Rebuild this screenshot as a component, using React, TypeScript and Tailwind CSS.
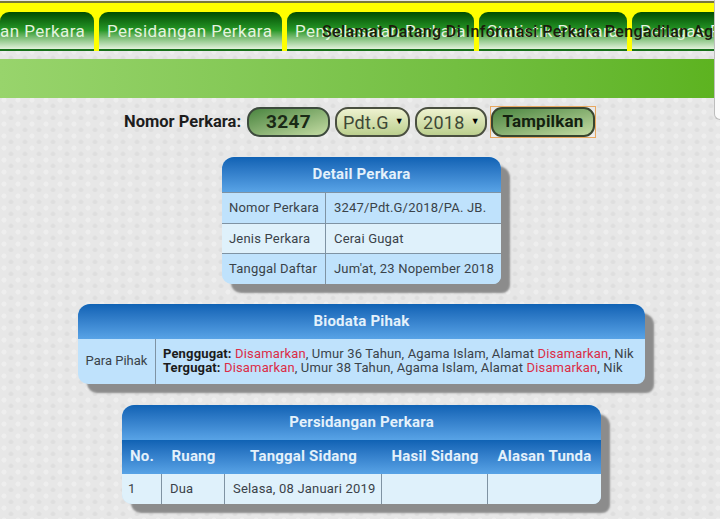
import { ReactNode } from 'react';

const tabs = [
  { label: 'an Perkara', width: 'w-[94px]', pad: 'pl-0' },
  { label: 'Persidangan Perkara', width: 'w-[183px]', pad: 'pl-[8px]' },
  { label: 'Penyelesaian Perkara', width: 'w-[187px]', pad: 'pl-[8px]' },
  { label: 'Statistik Perkara', width: 'w-[148px]', pad: 'pl-[8px]' },
  { label: 'Petugas Perkara', width: 'w-[149px]', pad: 'pl-[8px]' },
];

function Card({ title, className, children }: { title: string; className: string; children: ReactNode }) {
  return (
    <div className={`overflow-hidden rounded-t-[12px] rounded-bl-[10px] rounded-br-[8px] bg-[#bfe2fc] shadow-[9px_9px_2px_#8c8c8c] ${className}`}>
      <div className="flex h-[35px] items-center justify-center bg-gradient-to-b from-[#0f62b4] to-[#58a3e6] text-[15px] font-bold tracking-[0.2px] text-[#e4f1fb]">
        {title}
      </div>
      {children}
    </div>
  );
}

function Row({ label, value, light }: { label: string; value: string; light?: boolean }) {
  return (
    <div className={`flex h-[30.5px] items-center border-t border-[#7f93a3] text-[13px] tracking-[0.2px] text-[#3a4249] ${light ? 'bg-[#dff1fb]' : 'bg-[#bfe2fc]'}`}>
      <div className="flex h-full w-[104px] shrink-0 items-center border-r border-[#7f93a3] pl-[7px]">{label}</div>
      <div className="pl-[8px] whitespace-nowrap">{value}</div>
    </div>
  );
}

export default function App() {
  return (
    <div className="relative h-[519px] w-[720px] overflow-hidden bg-[#e7e7e7] bg-[radial-gradient(circle_at_4px_4px,#eeeeee_2px,transparent_3px),radial-gradient(circle_at_11px_10px,#dedede_1.5px,transparent_3px)] bg-[length:14px_12px] font-['Roboto',sans-serif]">
      {/* top strip + tabs */}
      <div className="h-[3px] border-b-2 border-[#77773a] bg-[#e6e6e6]" />
      <div className="flex h-[48px] gap-[5px] overflow-hidden bg-[#ffff00] pt-[9px]">
        {tabs.map((tab) => (
          <div
            key={tab.label}
            className={`flex h-[39px] shrink-0 items-center rounded-t-[9px] border-b-2 border-[#17701a] bg-gradient-to-b from-[#024d02] via-[#279a28] to-[#e3f2dc] pt-[3px] text-[17px] tracking-[0.45px] whitespace-nowrap text-[#e4f3df] ${tab.width} ${tab.pad}`}
          >
            {tab.label}
          </div>
        ))}
      </div>
      <div className="absolute top-[20px] left-[322px] text-[16px] font-medium tracking-[0.4px] whitespace-nowrap text-[#1c1c0c]">
        Selamat Datang Di Informasi Perkara Pengadilan Agama
      </div>

      {/* green bar */}
      <div className="mt-[8px] mr-[6px] h-[39px] bg-gradient-to-r from-[#98d46c] to-[#5db320]" />

      {/* scrollbar handle at the right edge */}
      <div className="absolute top-0 right-0 h-[120px] w-[6px] rounded-bl-[6px] border-b border-l border-[#bdbdbd] bg-[#fbfbfb]" />

      {/* search form */}
      <div className="mt-[8px] ml-[124px] flex items-center">
        <span className="w-[123px] pt-[1px] text-[16.5px] font-bold whitespace-nowrap text-[#1d1d1d]">Nomor Perkara:</span>
        <div className="flex h-[30px] w-[83px] items-center justify-center rounded-[13px] border-2 border-[#3d4a3d] bg-gradient-to-br from-[#4a8540] to-[#c4dca4] text-[19px] font-bold tracking-[0.4px] text-[#1a2a16]">
          3247
        </div>
        <div className="ml-[5px] flex h-[30px] w-[75px] items-center justify-between rounded-[13px] border-2 border-[#4a4f40] bg-gradient-to-b from-[#eef2cf] to-[#bccf8e] pr-[4px] pl-[6px] text-[18px] tracking-[0.3px] text-[#3e4836]">
          Pdt.G<span className="text-[9px] text-black">▼</span>
        </div>
        <div className="ml-[5px] flex h-[30px] w-[72px] items-center justify-between rounded-[13px] border-2 border-[#4a4f40] bg-gradient-to-b from-[#eef2cf] to-[#bccf8e] pr-[5px] pl-[6px] text-[18px] tracking-[0.3px] text-[#3e4836]">
          2018<span className="text-[9px] text-black">▼</span>
        </div>
        <div className="ml-[3px] border border-[#e8a860]">
          <div className="flex h-[30px] w-[104px] items-center justify-center rounded-[11px] border-2 border-[#38452f] bg-gradient-to-br from-[#4a8540] to-[#c4dca4] text-[17px] font-bold tracking-[0.2px] text-[#14210f]">
            Tampilkan
          </div>
        </div>
      </div>

      {/* detail */}
      <Card title="Detail Perkara" className="mt-[19px] ml-[222px] w-[279px]">
        <Row label="Nomor Perkara" value="3247/Pdt.G/2018/PA. JB." />
        <Row label="Jenis Perkara" value="Cerai Gugat" light />
        <Row label="Tanggal Daftar" value="Jum'at, 23 Nopember 2018" />
      </Card>

      {/* biodata */}
      <Card title="Biodata Pihak" className="mt-[20px] ml-[78px] w-[567px]">
        <div className="flex h-[45px] items-center text-[13px] leading-[14px] text-[#3a4249]">
          <div className="flex h-full w-[78px] shrink-0 items-center justify-center border-r border-[#7f93a3]">Para Pihak</div>
          <div className="pl-[7px] tracking-[0.15px] whitespace-nowrap">
            <div>
              <b className="text-[#1b1b1b]">Penggugat:</b> <span className="text-[#dc2c46]">Disamarkan</span>, Umur 36 Tahun, Agama Islam, Alamat <span className="text-[#dc2c46]">Disamarkan</span>, Nik
            </div>
            <div>
              <b className="text-[#1b1b1b]">Tergugat:</b> <span className="text-[#dc2c46]">Disamarkan</span>, Umur 38 Tahun, Agama Islam, Alamat <span className="text-[#dc2c46]">Disamarkan</span>, Nik
            </div>
          </div>
        </div>
      </Card>

      {/* persidangan */}
      <Card title="Persidangan Perkara" className="mt-[21px] ml-[122px] w-[479px]">
        <div className="grid grid-cols-[40px_63px_157px_106px_113px]">
          {['No.', 'Ruang', 'Tanggal Sidang', 'Hasil Sidang', 'Alasan Tunda'].map((head) => (
            <div key={head} className="flex h-[34px] items-center justify-center bg-gradient-to-b from-[#0f62b4] to-[#58a3e6] text-[15px] font-bold tracking-[0.2px] whitespace-nowrap text-[#e4f1fb]">
              {head}
            </div>
          ))}
          <div className="flex h-[30px] items-center border-r border-[#7f93a3] bg-[#dff1fb] pl-[6px] text-[13px] tracking-[0.2px] text-[#3a4249]">1</div>
          <div className="flex h-[30px] items-center border-r border-[#7f93a3] bg-[#dff1fb] pl-[8px] text-[13px] tracking-[0.2px] text-[#3a4249]">Dua</div>
          <div className="flex h-[30px] items-center border-r border-[#7f93a3] bg-[#dff1fb] pl-[8px] text-[13px] tracking-[0.2px] whitespace-nowrap text-[#3a4249]">Selasa, 08 Januari 2019</div>
          <div className="h-[30px] border-r border-[#7f93a3] bg-[#dff1fb]" />
          <div className="h-[30px] bg-[#dff1fb]" />
        </div>
      </Card>
    </div>
  );
}
